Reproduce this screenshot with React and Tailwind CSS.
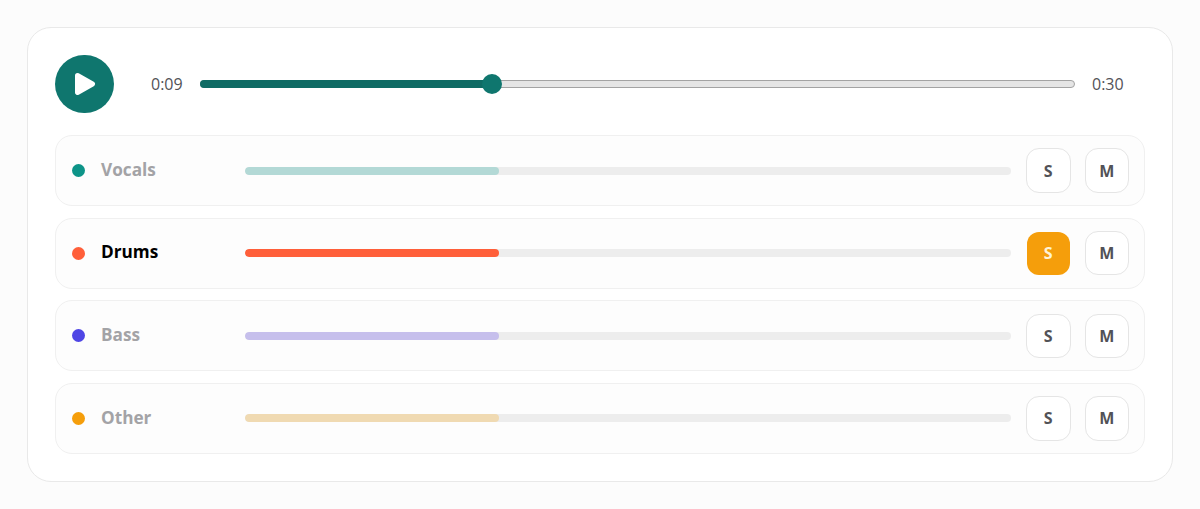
const stems = [
  { name: 'Vocals', dot: 'bg-[#0d9488]', fill: 'bg-[#b3d9d6]' },
  { name: 'Drums', dot: 'bg-[#ff5f3a]', fill: 'bg-[#ff5f3a]', active: true },
  { name: 'Bass', dot: 'bg-[#4f46e5]', fill: 'bg-[#c6bfec]' },
  { name: 'Other', dot: 'bg-[#f59e0b]', fill: 'bg-[#f0dab2]' },
]

function StemButton({ label, active }) {
  if (active) {
    return (
      <button className="w-[43px] h-[43px] mx-[0.75px] rounded-[12px] bg-[#f59e0b] text-[#fff3d6] text-[16px] font-bold flex items-center justify-center">
        {label}
      </button>
    )
  }
  return (
    <button className="w-[44.5px] h-[44.5px] rounded-[13px] bg-white border border-[#e5e5e5] text-[#525257] text-[16px] font-bold flex items-center justify-center">
      {label}
    </button>
  )
}

function StemRow({ stem }) {
  return (
    <div className="h-[71px] flex items-center pl-[16px] pr-[15px] rounded-[17px] bg-[#fdfdfd] border border-[#f0f0f0]">
      <span className={`w-[13px] h-[13px] rounded-full shrink-0 ${stem.dot}`} />
      <span className={`w-[144px] ml-[16px] pb-[2px] shrink-0 text-[17.2px] font-bold ${stem.active ? 'text-black' : 'text-[#a3a3a6]'}`}>
        {stem.name}
      </span>
      {/* Progress track */}
      <div className="w-[766px] h-[8px] shrink-0 rounded-full bg-[#ededed] overflow-hidden">
        <div className={`w-[254px] h-full rounded-full ${stem.fill}`} />
      </div>
      <div className="ml-auto flex items-center gap-[14px]">
        <StemButton label="S" active={stem.active} />
        <StemButton label="M" />
      </div>
    </div>
  )
}

export default function App() {
  return (
    <div className="w-[1200px] h-[509px] bg-[#fcfcfc] p-[27px] font-['Open_Sans',sans-serif]">
      <div className="w-[1146px] h-[455px] rounded-[24px] bg-white border border-[#e9e9e9] px-[27px] pt-[27px]">
        {/* Player */}
        <div className="flex items-center h-[58px]">
          <button className="w-[58.5px] h-[58.5px] shrink-0 rounded-full bg-[#0f766e] flex items-center justify-center">
            <svg viewBox="0 0 24 24" className="w-[24px] h-[24px] ml-[2px]" fill="white" stroke="white" strokeWidth="5" strokeLinejoin="round">
              <path d="M4.5 3.5 L19.5 12 L4.5 20.5 Z" />
            </svg>
          </button>
          <span className="ml-[37.5px] w-[32px] shrink-0 text-[16px] font-medium text-[#525257] whitespace-nowrap">0:09</span>
          <div className="relative ml-[17px] w-[875px] h-[8px] shrink-0 rounded-full bg-[#e5e5e5] border border-[#a3a3a3]">
            <div className="absolute -left-px -top-px w-[292px] h-[8px] rounded-full bg-[#0f6b64]" />
            <div className="absolute left-[281px] -top-[7px] w-[20px] h-[20px] rounded-full bg-[#0f766e]" />
          </div>
          <span className="ml-[17px] w-[32px] shrink-0 text-[16px] font-medium text-[#525257] whitespace-nowrap">0:30</span>
        </div>

        {/* Stems */}
        <div className="mt-[22px] flex flex-col gap-[11.67px]">
          {stems.map((stem) => (
            <StemRow key={stem.name} stem={stem} />
          ))}
        </div>
      </div>
    </div>
  )
}
